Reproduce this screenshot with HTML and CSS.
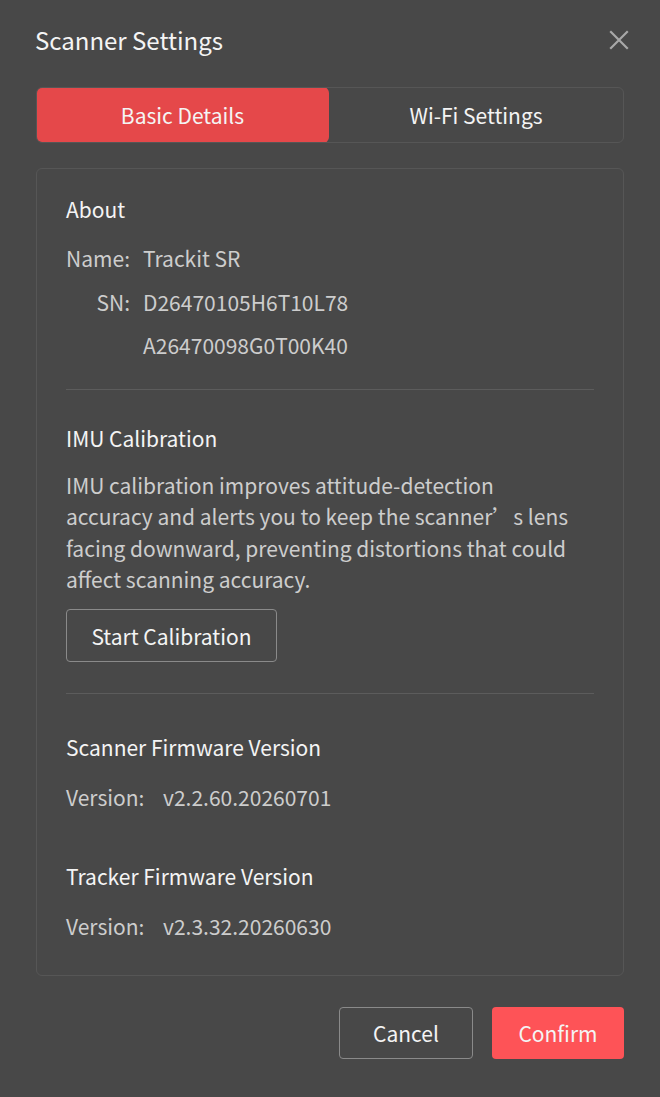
FILE: index.html
```html
<!DOCTYPE html>
<html lang="en">
<head>
<meta charset="utf-8">
<title>Scanner Settings</title>
<link rel="stylesheet" href="styles.css">
</head>
<body>
<div class="dialog">
  <div class="header">
    <h1 class="title">Scanner Settings</h1>
    <button class="close" aria-label="Close">
      <svg width="20" height="20" viewBox="0 0 20 20"><path d="M2 2 L18 18 M18 2 L2 18" stroke="#a8a8a8" stroke-width="2.2" stroke-linecap="square" fill="none"/></svg>
    </button>
  </div>

  <div class="tabs">
    <div class="tab active">Basic Details</div>
    <div class="tab">Wi-Fi Settings</div>
  </div>

  <div class="card">
    <section class="about">
      <h2 class="section-title">About</h2>
      <div class="info-row first">
        <span class="label">Name:</span>
        <span class="value">Trackit SR</span>
      </div>
      <div class="info-row">
        <span class="label">SN:</span>
        <span class="value">D26470105H6T10L78</span>
      </div>
      <div class="info-row">
        <span class="label"></span>
        <span class="value">A26470098G0T00K40</span>
      </div>
    </section>

    <hr class="divider">

    <section class="imu">
      <h2 class="section-title">IMU Calibration</h2>
      <p class="desc">IMU calibration improves attitude-detection accuracy and alerts you to keep the scanner’s lens facing downward, preventing distortions that could affect scanning accuracy.</p>
      <button class="btn outline calib">Start Calibration</button>
    </section>

    <hr class="divider second">

    <section class="firmware">
      <h2 class="section-title fw-first">Scanner Firmware Version</h2>
      <div class="version-row"><span class="vlabel">Version:</span><span class="vvalue">v2.2.60.20260701</span></div>
      <h2 class="section-title fw-next">Tracker Firmware Version</h2>
      <div class="version-row"><span class="vlabel">Version:</span><span class="vvalue">v2.3.32.20260630</span></div>
    </section>
  </div>

  <div class="footer">
    <button class="btn outline">Cancel</button>
    <button class="btn primary">Confirm</button>
  </div>
</div>
</body>
</html>
```

FILE: styles.css
```css
* {
  box-sizing: border-box;
}

html, body {
  margin: 0;
  padding: 0;
  background: #484848;
}

body {
  font-family: "Noto Sans CJK SC", "Noto Sans", sans-serif;
  color: #f2f2f2;
  width: 660px;
  height: 1097px;
  overflow: hidden;
}

.dialog {
  padding: 24px 36px 0 36px;
}

.header {
  height: 32px;
  display: flex;
  align-items: center;
  justify-content: space-between;
}

.title {
  margin: 0 0 0 -1px;
  font-size: 24px;
  font-weight: 400;
  line-height: 32px;
  color: #f4f4f4;
}

.close {
  background: none;
  border: 0;
  padding: 0;
  margin-right: -7px;
  width: 24px;
  height: 24px;
  display: flex;
  align-items: center;
  justify-content: center;
}

.tabs {
  margin-top: 31px;
  height: 56px;
  display: flex;
  border: 1px solid #565656;
  border-radius: 6px;
  overflow: hidden;
}

.tab {
  flex: 1;
  display: flex;
  align-items: center;
  justify-content: center;
  font-size: 21px;
  color: #f4f4f4;
}

.tab.active {
  flex: 0 0 293px;
  background: #e5484a;
  margin: -1px 0 -1px -1px;
  border-radius: 6px;
}

.card {
  margin-top: 25px;
  border: 1px solid #565656;
  border-radius: 6px;
  padding: 25px 29px 35px 29px;
  height: 808px;
}

.section-title {
  margin: 0;
  font-size: 21px;
  font-weight: 400;
  line-height: 30px;
  color: #f4f4f4;
}

.info-row {
  display: flex;
  margin-top: 15.5px;
  font-size: 21px;
  line-height: 28px;
  color: #cdcdcd;
}

.info-row.first {
  margin-top: 20px;
}

.label {
  width: 64px;
  text-align: right;
}

.value {
  margin-left: 13px;
}

.divider {
  border: 0;
  height: 1px;
  background: #5c5c5c;
  margin: 30px 0 0 0;
}

.imu .section-title {
  margin-top: 33px;
}

.desc {
  margin: 17px 0 0 0;
  max-width: 510px;
  font-size: 21px;
  line-height: 31.3px;
  color: #cdcdcd;
}

.btn {
  font-family: inherit;
  font-size: 21px;
  color: #f4f4f4;
  border-radius: 4px;
  height: 53px;
  padding: 0;
  display: flex;
  align-items: center;
  justify-content: center;
}

.btn.outline {
  background: transparent;
  border: 1px solid #8a8a8a;
}

.calib {
  margin-top: 14px;
  width: 211px;
}

.divider.second {
  margin-top: 31px;
}

.fw-first {
  margin-top: 38px;
}

.fw-next {
  margin-top: 50px;
}

.version-row {
  display: flex;
  margin-top: 21px;
  font-size: 21px;
  line-height: 28px;
  color: #cdcdcd;
}

.vlabel {
  width: 97px;
}

.footer {
  margin-top: 31px;
  display: flex;
  justify-content: flex-end;
  gap: 19px;
}

.footer .btn {
  height: 52px;
}

.footer .outline {
  width: 134px;
}

.btn.primary {
  width: 132px;
  background: #fe5357;
  border: 0;
}
```
